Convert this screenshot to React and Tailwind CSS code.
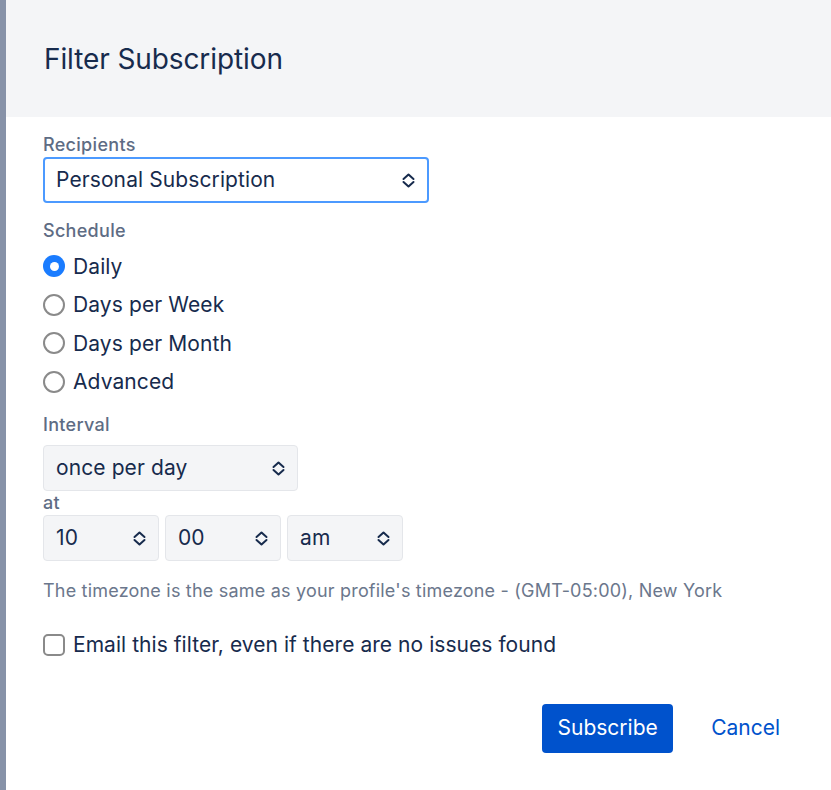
import { useState } from "react";

function Chevrons() {
  return (
    <svg className="h-[15px] w-[13px] shrink-0 text-[#172b4d]" viewBox="0 0 13 15" fill="none" stroke="currentColor" strokeWidth={2} strokeLinecap="round" strokeLinejoin="round">
      <path d="M1.5 6L6.5 1.5L11.5 6" />
      <path d="M1.5 9L6.5 13.5L11.5 9" />
    </svg>
  );
}

function Select({ value, className, focused }) {
  return (
    <div
      className={
        "flex h-[46px] items-center justify-between rounded-[4px] pr-3 text-[21px] tracking-[0.1px] text-[#172b4d] " +
        (focused ? "border-2 border-[#4c9aff] bg-white pl-[11px] " : "border border-[#e4e6ea] bg-[#f4f5f7] pl-3 ") +
        className
      }
    >
      <span>{value}</span>
      <Chevrons />
    </div>
  );
}

function Radio({ label, checked, onClick }) {
  return (
    <button type="button" onClick={onClick} className="flex h-[38.5px] items-center gap-2 text-left text-[21px] tracking-[0.1px] text-[#172b4d]">
      {checked ? (
        <span className="flex h-[22px] w-[22px] items-center justify-center rounded-full bg-[#1a7cff]">
          <span className="h-[9px] w-[9px] rounded-full bg-white" />
        </span>
      ) : (
        <span className="h-[22px] w-[22px] rounded-full border-2 border-[#8a8a8a] bg-white" />
      )}
      {label}
    </button>
  );
}

export default function App() {
  const [schedule, setSchedule] = useState("Daily");
  const [emailEmpty, setEmailEmpty] = useState(false);

  const labelCls = "text-[18px] font-medium leading-[20px] tracking-[0.3px] text-[#5e6c84]";

  return (
    <div className="flex h-[790px] w-[831px] bg-white font-['Inter',sans-serif]">
      <div className="w-[6px] shrink-0 bg-[#8792a8]" />
      <div className="flex flex-1 flex-col">
        <div className="flex h-[117px] items-center bg-[#f4f5f7] pl-[38px]">
          <h1 className="text-[28px] font-normal tracking-[-0.1px] text-[#172b4d]">Filter Subscription</h1>
        </div>

        <div className="flex flex-col pl-[37px] pt-[18px]">
          <label className={labelCls}>Recipients</label>
          <Select value="Personal Subscription" focused className="mt-[2px] w-[386px]" />

          <label className={"mt-[18px] " + labelCls}>Schedule</label>
          <div className="mt-[6px] flex flex-col">
            {["Daily", "Days per Week", "Days per Month", "Advanced"].map((s) => (
              <Radio key={s} label={s} checked={schedule === s} onClick={() => setSchedule(s)} />
            ))}
          </div>

          <label className={"mt-[14px] " + labelCls}>Interval</label>
          <Select value="once per day" className="mt-[10px] w-[255px]" />

          <label className="text-[18px] font-medium leading-[24px] tracking-[0.3px] text-[#5e6c84]">at</label>
          <div className="flex gap-[6px]">
            <Select value="10" className="w-[116px]" />
            <Select value="00" className="w-[116px]" />
            <Select value="am" className="w-[116px]" />
          </div>

          <p className="mt-[20px] text-[18px] leading-[20px] tracking-[0.2px] text-[#6b778c]">
            The timezone is the same as your profile's timezone - (GMT-05:00), New York
          </p>

          <button
            type="button"
            onClick={() => setEmailEmpty(!emailEmpty)}
            className="mt-[28px] flex items-center gap-2 text-left text-[21px] tracking-[0.05px] text-[#172b4d]"
          >
            <span className="flex h-[22px] w-[22px] items-center justify-center rounded-[5px] border-2 border-[#8a8a8a] bg-white">
              {emailEmpty ? <span className="h-[10px] w-[10px] rounded-sm bg-[#1a7cff]" /> : null}
            </span>
            Email this filter, even if there are no issues found
          </button>

          <div className="mt-[43px] flex items-center justify-end gap-[38px] pr-[51px]">
            <button type="button" className="h-[49px] w-[131px] rounded-[4px] bg-[#0052cc] text-[21px] text-white">
              Subscribe
            </button>
            <button type="button" className="text-[21px] text-[#0052cc]">
              Cancel
            </button>
          </div>
        </div>
      </div>
    </div>
  );
}
